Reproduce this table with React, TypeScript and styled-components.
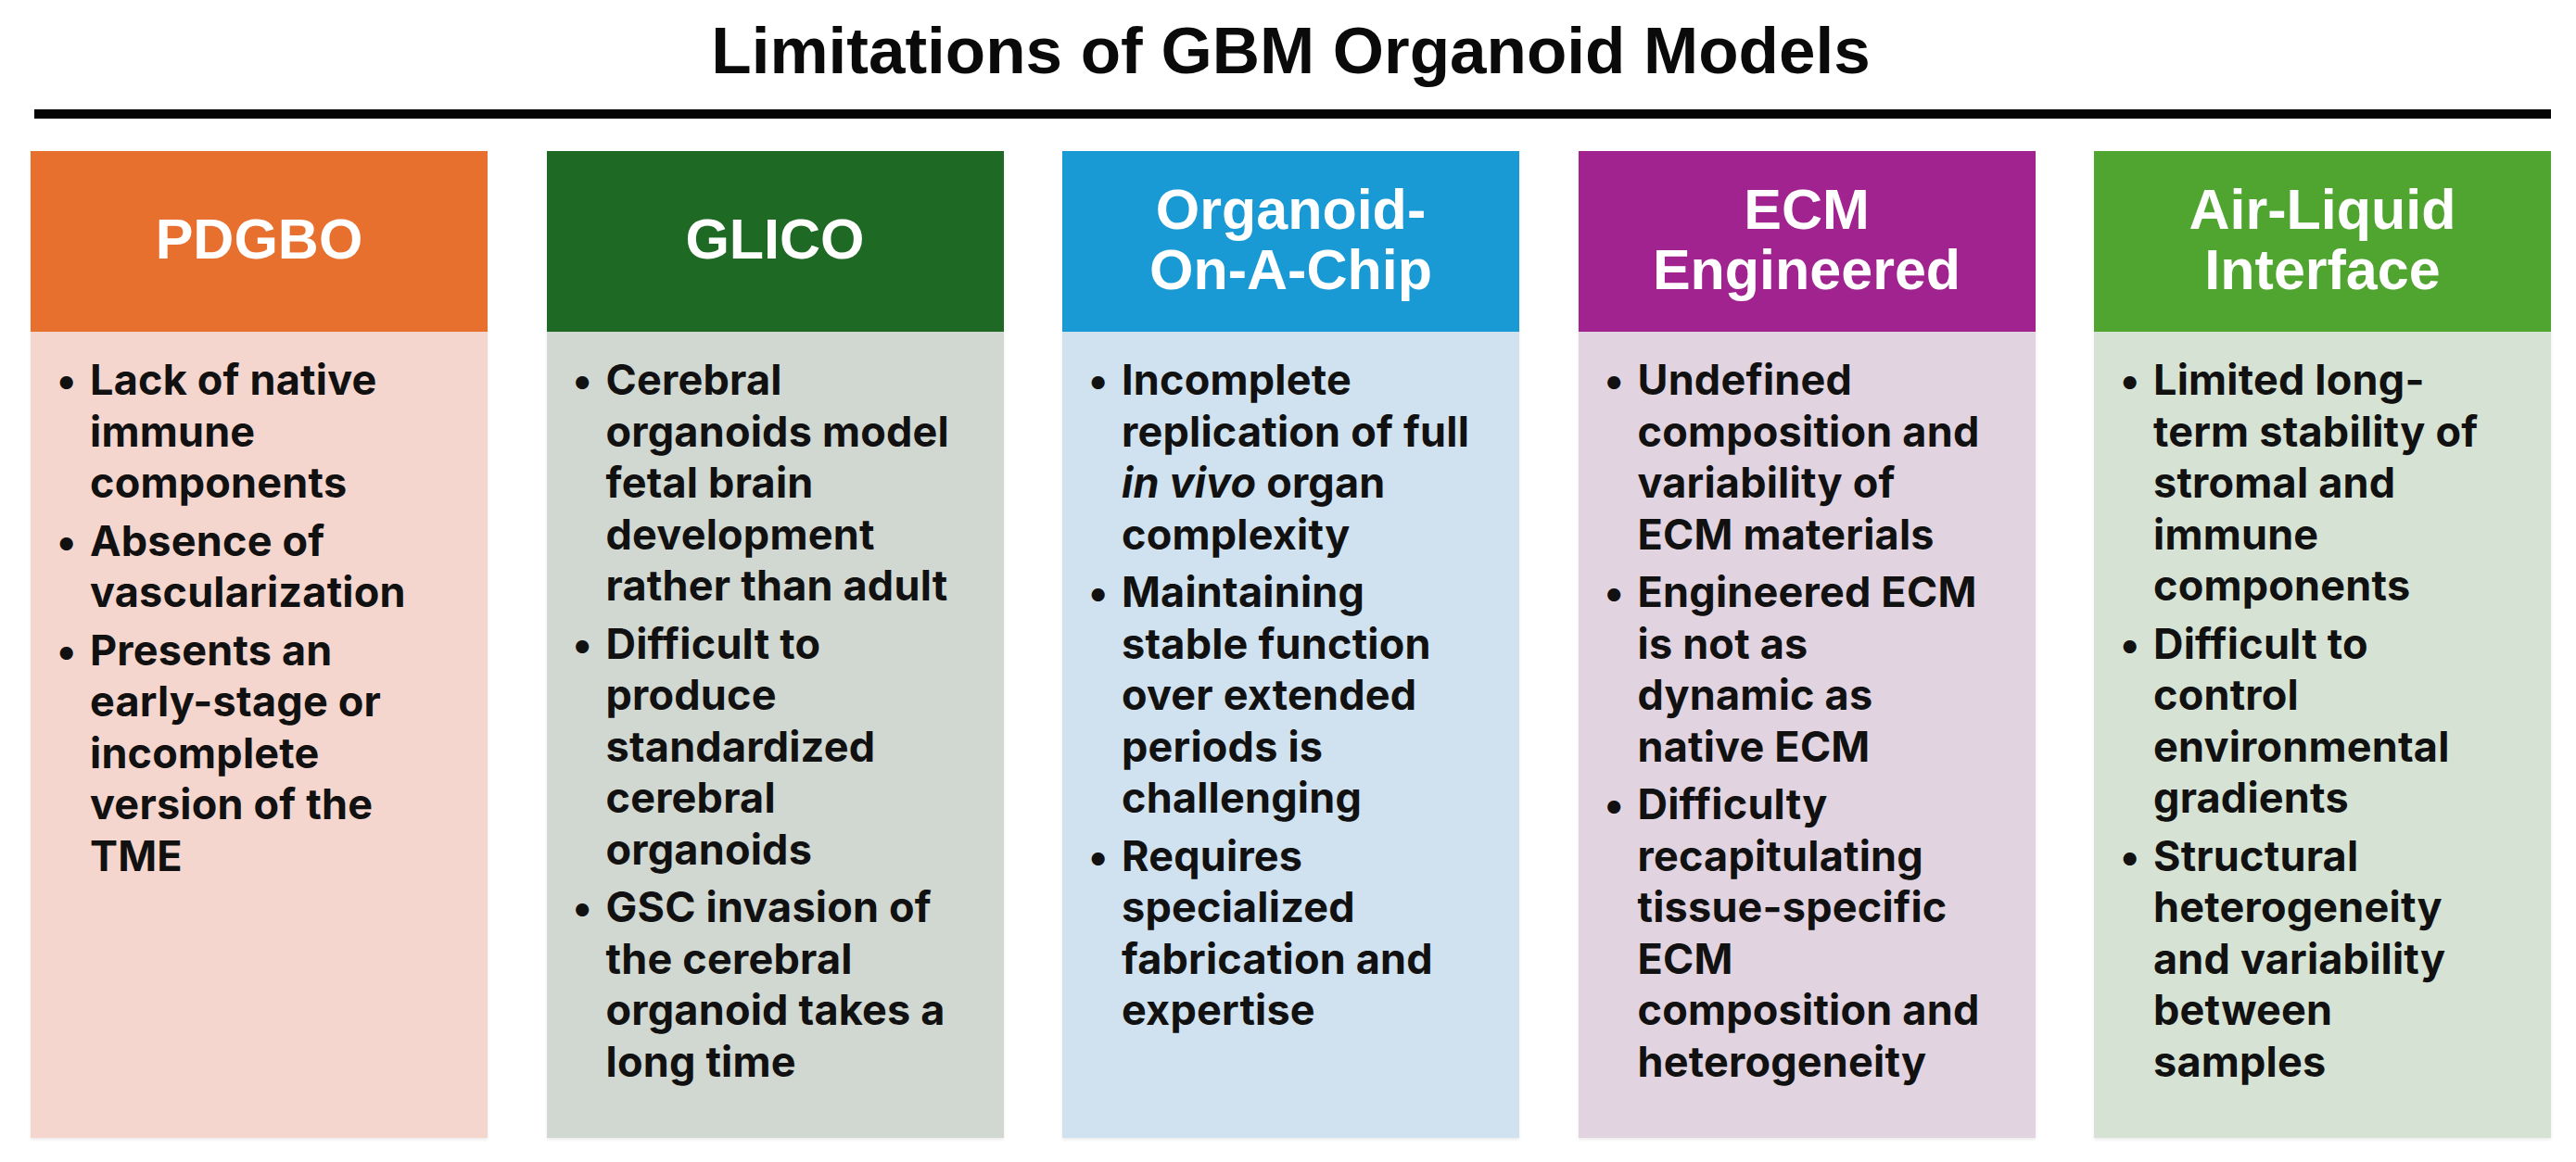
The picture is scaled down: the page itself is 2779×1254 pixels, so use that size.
import React from "react";
import styled, {createGlobalStyle} from "styled-components";

const GlobalStyle = createGlobalStyle`
    html, body {
        margin: 0;
        padding: 0;
        background: #FFFFFF;
    }
`;

const Page = styled.div`
    width: 2779px;
    height: 1254px;
    box-sizing: border-box;
    padding: 0 27px 0 33px;
    background: #FFFFFF;
    display: flex;
    flex-direction: column;
`;

const Title = styled.h1`
    margin: 0;
    height: 112px;
    display: flex;
    align-items: center;
    justify-content: center;
    padding-bottom: 4px;
    box-sizing: border-box;
    font-family: "Liberation Sans", Arial, sans-serif;
    font-weight: 700;
    font-size: 71px;
    color: #0A0A0A;
`;

const Rule = styled.div`
    margin: 6px 0 0 4px;
    height: 10px;
    background: #050505;
`;

const Grid = styled.div`
    margin-top: 35px;
    display: grid;
    grid-template-columns: repeat(5, 1fr);
    column-gap: 63.5px;
`;

const Column = styled.div`
    display: flex;
    flex-direction: column;
    height: 1065px;
    box-shadow: 0 2px 3px rgba(0, 0, 0, 0.08);
`;

const Header = styled.div<{ $bg: string }>`
    height: 195px;
    flex: none;
    display: flex;
    align-items: center;
    justify-content: center;
    text-align: center;
    background: ${p => p.$bg};
    color: #FFFFFF;
    font-family: "Liberation Sans", Arial, sans-serif;
    font-weight: 700;
    font-size: 61px;
    line-height: 65px;
    padding-bottom: 4px;
    box-sizing: border-box;
`;

const Body = styled.ul<{ $bg: string }>`
    flex: 1;
    margin: 0;
    list-style: none;
    padding: 24px 0 0 28px;
    background: ${p => p.$bg};
`;

const Item = styled.li`
    display: flex;
    margin-bottom: 7px;
    font-family: Inter, "Open Sans", sans-serif;
    font-weight: 700;
    font-size: 45px;
    line-height: 55.5px;
    color: #111111;
    letter-spacing: 0.2px;
`;

const Bullet = styled.span`
    width: 36px;
    flex: none;
`;

const Text = styled.span`
    white-space: nowrap;
`;

type Col = {
    title: React.ReactNode;
    head: string;
    body: string;
    items: React.ReactNode[][];
};

const columns: Col[] = [
    {
        title: "PDGBO",
        head: "#E7702F",
        body: "#F5D6CE",
        items: [
            ["Lack of native", "immune", "components"],
            ["Absence of", "vascularization"],
            ["Presents an", "early-stage or", "incomplete", "version of the", "TME"],
        ],
    },
    {
        title: "GLICO",
        head: "#1E6A24",
        body: "#D1D8D1",
        items: [
            ["Cerebral", "organoids model", "fetal brain", "development", "rather than adult"],
            ["Difficult to", "produce", "standardized", "cerebral", "organoids"],
            ["GSC invasion of", "the cerebral", "organoid takes a", "long time"],
        ],
    },
    {
        title: <>Organoid-<br/>On-A-Chip</>,
        head: "#199AD5",
        body: "#D0E1EF",
        items: [
            ["Incomplete", "replication of full", <><i>in vivo</i> organ</>, "complexity"],
            ["Maintaining", "stable function", "over extended", "periods is", "challenging"],
            ["Requires", "specialized", "fabrication and", "expertise"],
        ],
    },
    {
        title: <>ECM<br/>Engineered</>,
        head: "#A0238F",
        body: "#E2D3E0",
        items: [
            ["Undefined", "composition and", "variability of", "ECM materials"],
            ["Engineered ECM", "is not as", "dynamic as", "native ECM"],
            ["Difficulty", "recapitulating", "tissue-specific", "ECM", "composition and", "heterogeneity"],
        ],
    },
    {
        title: <>Air-Liquid<br/>Interface</>,
        head: "#4FA52F",
        body: "#D6E3D4",
        items: [
            ["Limited long-", "term stability of", "stromal and", "immune", "components"],
            ["Difficult to", "control", "environmental", "gradients"],
            ["Structural", "heterogeneity", "and variability", "between", "samples"],
        ],
    },
];

const App = () => {
    return (
        <>
            <GlobalStyle/>
            <Page>
                <Title>Limitations of GBM Organoid Models</Title>
                <Rule/>
                <Grid>
                    {columns.map((col, i) => (
                        <Column key={i}>
                            <Header $bg={col.head}>{col.title}</Header>
                            <Body $bg={col.body}>
                                {col.items.map((lines, j) => (
                                    <Item key={j}>
                                        <Bullet>•</Bullet>
                                        <Text>
                                            {lines.map((line, k) => (
                                                <React.Fragment key={k}>
                                                    {k > 0 && <br/>}
                                                    {line}
                                                </React.Fragment>
                                            ))}
                                        </Text>
                                    </Item>
                                ))}
                            </Body>
                        </Column>
                    ))}
                </Grid>
            </Page>
        </>
    );
}

export default App;
